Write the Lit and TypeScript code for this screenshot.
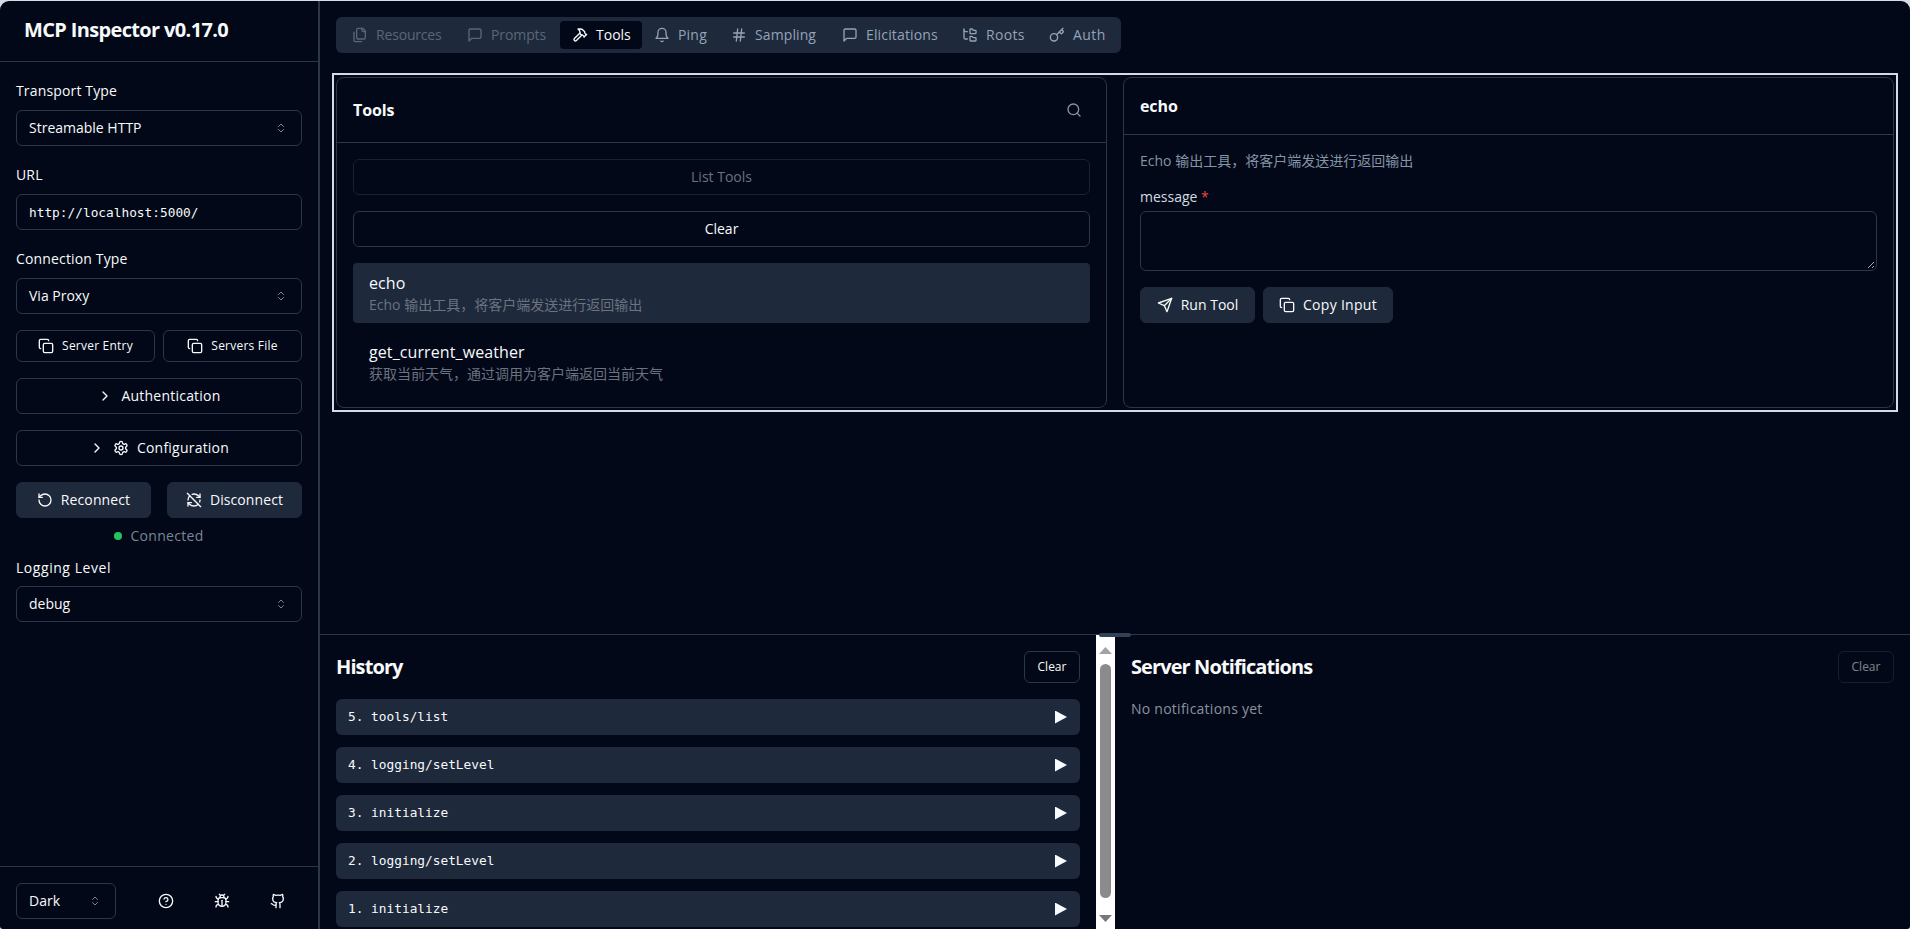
import { LitElement, html, css, svg } from "lit";
import { customElement } from "lit/decorators.js";

const ICONS: Record<string, any> = {
  copy: svg`<rect x="8" y="8" width="14" height="14" rx="2" ry="2"/><path d="M4 16c-1.1 0-2-.9-2-2V4c0-1.1.9-2 2-2h10c1.1 0 2 .9 2 2"/>`,
  chevronRight: svg`<path d="m9 18 6-6-6-6"/>`,
  updown: svg`<path d="m7 15 5 5 5-5"/><path d="m7 9 5-5 5 5"/>`,
  settings: svg`<path d="M12.22 2h-.44a2 2 0 0 0-2 2v.18a2 2 0 0 1-1 1.73l-.43.25a2 2 0 0 1-2 0l-.15-.08a2 2 0 0 0-2.73.73l-.22.38a2 2 0 0 0 .73 2.73l.15.1a2 2 0 0 1 1 1.72v.51a2 2 0 0 1-1 1.74l-.15.09a2 2 0 0 0-.73 2.73l.22.38a2 2 0 0 0 2.73.73l.15-.08a2 2 0 0 1 2 0l.43.25a2 2 0 0 1 1 1.73V20a2 2 0 0 0 2 2h.44a2 2 0 0 0 2-2v-.18a2 2 0 0 1 1-1.73l.43-.25a2 2 0 0 1 2 0l.15.08a2 2 0 0 0 2.73-.73l.22-.39a2 2 0 0 0-.73-2.73l-.15-.08a2 2 0 0 1-1-1.74v-.5a2 2 0 0 1 1-1.74l.15-.09a2 2 0 0 0 .73-2.73l-.22-.38a2 2 0 0 0-2.73-.73l-.15.08a2 2 0 0 1-2 0l-.43-.25a2 2 0 0 1-1-1.73V4a2 2 0 0 0-2-2z"/><circle cx="12" cy="12" r="3"/>`,
  rotate: svg`<path d="M3 12a9 9 0 1 0 9-9 9.75 9.75 0 0 0-6.74 2.74L3 8"/><path d="M3 3v5h5"/>`,
  refreshOff: svg`<path d="M21 8L18.74 5.74A9.75 9.75 0 0 0 12 3C11 3 10.03 3.16 9.13 3.47"/><path d="M8 16H3v5"/><path d="M3 12C3 9.51 4 7.26 5.64 5.64"/><path d="m3 16 2.26 2.26A9.75 9.75 0 0 0 12 21c2.49 0 4.74-1 6.36-2.64"/><path d="M21 12c0 1-.16 1.97-.47 2.87"/><path d="M21 3v5h-5"/><path d="M22 22 2 2"/>`,
  help: svg`<circle cx="12" cy="12" r="10"/><path d="M9.09 9a3 3 0 0 1 5.83 1c0 2-3 3-3 3"/><path d="M12 17h.01"/>`,
  bug: svg`<path d="m8 2 1.88 1.88"/><path d="M14.12 3.88 16 2"/><path d="M9 7.13v-1a3.003 3.003 0 1 1 6 0v1"/><path d="M12 20c-3.3 0-6-2.7-6-6v-3a4 4 0 0 1 4-4h4a4 4 0 0 1 4 4v3c0 3.3-2.7 6-6 6"/><path d="M12 20v-9"/><path d="M6.53 9C4.6 8.8 3 7.1 3 5"/><path d="M6 13H2"/><path d="M3 21c0-2.1 1.7-3.9 3.8-4"/><path d="M20.97 5c0 2.1-1.6 3.8-3.5 4"/><path d="M22 13h-4"/><path d="M17.2 17c2.1.1 3.8 1.9 3.8 4"/>`,
  github: svg`<path d="M15 22v-4a4.8 4.8 0 0 0-1-3.5c3 0 6-2 6-5.5.08-1.25-.27-2.48-1-3.5.28-1.15.28-2.35 0-3.5 0 0-1 0-3 1.5-2.64-.5-5.36-.5-8 0C6 2 5 2 5 2c-.3 1.15-.3 2.35 0 3.5A5.403 5.403 0 0 0 4 9c0 3.5 3 5.5 6 5.5-.39.49-.68 1.05-.85 1.65-.17.6-.22 1.23-.15 1.85v4"/><path d="M9 18c-4.51 2-5-2-7-2"/>`,
  files: svg`<path d="M20 7h-3a2 2 0 0 1-2-2V2"/><path d="M9 18a2 2 0 0 1-2-2V4a2 2 0 0 1 2-2h7l4 4v10a2 2 0 0 1-2 2Z"/><path d="M3 7.6v12.8A1.6 1.6 0 0 0 4.6 22h9.8"/>`,
  message: svg`<path d="M21 15a2 2 0 0 1-2 2H7l-4 4V5a2 2 0 0 1 2-2h14a2 2 0 0 1 2 2z"/>`,
  hammer: svg`<path d="m15 12-8.373 8.373a1 1 0 1 1-3-3L12 9"/><path d="m18 15 4-4"/><path d="m21.5 11.5-1.914-1.914A2 2 0 0 1 19 8.172V7l-2.26-2.26a6 6 0 0 0-4.202-1.756L9 2.96l.92.82A6.18 6.18 0 0 1 12 8.4V10l2 2h1.172a2 2 0 0 1 1.414.586L18.5 14.5"/>`,
  bell: svg`<path d="M6 8a6 6 0 0 1 12 0c0 7 3 9 3 9H3s3-2 3-9"/><path d="M10.3 21a1.94 1.94 0 0 0 3.4 0"/>`,
  hash: svg`<line x1="4" x2="20" y1="9" y2="9"/><line x1="4" x2="20" y1="15" y2="15"/><line x1="10" x2="8" y1="3" y2="21"/><line x1="16" x2="14" y1="3" y2="21"/>`,
  tree: svg`<path d="M20 10a1 1 0 0 0 1-1V6a1 1 0 0 0-1-1h-2.5a1 1 0 0 1-.8-.4l-.9-1.2A1 1 0 0 0 15 3h-2a1 1 0 0 0-1 1v5a1 1 0 0 0 1 1Z"/><path d="M20 21a1 1 0 0 0 1-1v-3a1 1 0 0 0-1-1h-2.9a1 1 0 0 1-.88-.55l-.42-.85a1 1 0 0 0-.92-.6H13a1 1 0 0 0-1 1v5a1 1 0 0 0 1 1Z"/><path d="M3 5a2 2 0 0 0 2 2h3"/><path d="M3 3v13a2 2 0 0 0 2 2h3"/>`,
  key: svg`<path d="m15.5 7.5 2.3 2.3a1 1 0 0 0 1.4 0l2.1-2.1a1 1 0 0 0 0-1.4L19 4"/><path d="m21 2-9.6 9.6"/><circle cx="7.5" cy="15.5" r="5.5"/>`,
  send: svg`<path d="m22 2-7 20-4-9-9-4Z"/><path d="M22 2 11 13"/>`,
  search: svg`<circle cx="11" cy="11" r="8"/><path d="m21 21-4.3-4.3"/>`,
};

const icon = (name: string) =>
  html`<svg class="icon" viewBox="0 0 24 24" fill="none" stroke="currentColor" stroke-width="2" stroke-linecap="round" stroke-linejoin="round">${ICONS[name]}</svg>`;

const TABS = [
  { n: "Resources", i: "files", w: 115, ls: -0.18, off: true },
  { n: "Prompts", i: "message", w: 105, ls: -0.1, off: true },
  { n: "Tools", i: "hammer", w: 82, ls: 0, on: true },
  { n: "Ping", i: "bell", w: 77, ls: 0.2 },
  { n: "Sampling", i: "hash", w: 111, ls: 0.1 },
  { n: "Elicitations", i: "message", w: 120, ls: 0.15 },
  { n: "Roots", i: "tree", w: 87, ls: 0.3 },
  { n: "Auth", i: "key", w: 80, ls: 0.4 },
];

const HISTORY = ["5. tools/list", "4. logging/setLevel", "3. initialize", "2. logging/setLevel", "1. initialize"];

@customElement("app-root")
export class AppRoot extends LitElement {
  static styles = css`
    :host {
      display: block;
      height: 929px;
      overflow: hidden;
      background: #d9dde3;
      color: #f8fafc;
      font-family: "Open Sans", "Noto Sans CJK SC", sans-serif;
      font-size: 14px;
      line-height: 20px;
    }
    * { box-sizing: border-box; }
    .icon { width: 16px; height: 16px; flex: none; display: block; }
    .app {
      display: flex;
      height: 928px;
      margin-top: 1px;
      background: #020817;
      border-radius: 9px 9px 3px 3px;
      overflow: hidden;
    }
    /* sidebar */
    .side {
      width: 320px;
      flex: none;
      display: flex;
      flex-direction: column;
      border-right: 2px solid #2b3648;
    }
    .brand {
      height: 61px;
      flex: none;
      border-bottom: 1px solid #2b3648;
      padding: 0 0 2px 24px;
      display: flex;
      align-items: center;
      font-size: 20px;
      font-weight: 700;
      letter-spacing: -0.65px;
    }
    .form { flex: 1; padding: 20px 16px 0; display: flex; flex-direction: column; }
    .label { height: 20px; line-height: 18px; margin-bottom: 8px; letter-spacing: 0.15px; }
    .label.loose { letter-spacing: 0.55px; line-height: 20px; }
    .field {
      height: 36px;
      flex: none;
      border: 1px solid #2b3648;
      border-radius: 6px;
      padding: 0 12px;
      display: flex;
      align-items: center;
      justify-content: space-between;
      margin-bottom: 20px;
    }
    .field .icon { opacity: 0.5; width: 12px; height: 12px; margin-right: 2px; }
    .mono {
      font-family: "DejaVu Sans Mono", monospace;
      font-size: 12.8px;
      letter-spacing: 0;
    }
    .url { padding-top: 2px; }
    .pair { display: flex; gap: 8px; margin: -4px 0 16px; }
    .pair .btn { flex: 1; height: 32px; font-size: 12px; letter-spacing: 0.22px; }
    .btn {
      height: 36px;
      flex: none;
      border: 1px solid #2b3648;
      border-radius: 6px;
      display: flex;
      align-items: center;
      justify-content: center;
      gap: 8px;
    }
    .stack { margin-bottom: 16px; letter-spacing: 0.22px; }
    .solid { background: #1e293b; border-color: #1e293b; }
    .duo { display: flex; gap: 16px; }
    .duo .btn { flex: 1; letter-spacing: 0.1px; }
    .status {
      display: flex;
      align-items: center;
      justify-content: center;
      gap: 8px;
      margin: 8px 0 12px;
      color: #7a8594;
      letter-spacing: 0.3px;
    }
    .dot { width: 8px; height: 8px; border-radius: 50%; background: #22c55e; }
    .foot {
      height: 63px;
      flex: none;
      border-top: 1px solid #2b3648;
      padding: 16px 16px 0;
      display: flex;
      align-items: flex-start;
    }
    .foot .field { width: 100px; margin: 0 30px 0 0; }
    .foot-icons { display: flex; gap: 16px; }
    .foot-icons span { width: 40px; height: 36px; display: flex; align-items: center; justify-content: center; }
    /* main */
    .main { flex: 1; min-width: 0; display: flex; flex-direction: column; position: relative; }
    .top { height: 633px; flex: none; padding: 16px; }
    .tabs {
      display: inline-flex;
      height: 36px;
      padding: 4px;
      background: #1e293b;
      border-radius: 6px;
      color: #94a3b8;
      margin-bottom: 24px;
      vertical-align: top;
    }
    .tab { display: flex; align-items: center; gap: 8px; padding: 0 0 0 12px; border-radius: 4px; white-space: nowrap; }
    .tab.off { opacity: 0.5; }
    .tab.on { background: #020817; color: #f8fafc; }
    .panes {
      height: 331px;
      display: grid;
      grid-template-columns: 1fr 1fr;
      grid-template-rows: minmax(0, 1fr);
      gap: 16px;
      outline: 2px solid #d5dbe5;
      outline-offset: 2px;
    }
    .card { border: 1px solid #2b3648; border-radius: 8px; display: flex; flex-direction: column; min-width: 0; min-height: 0; overflow: hidden; }
    .head {
      flex: none;
      border-bottom: 1px solid #2b3648;
      padding: 0 16px;
      display: flex;
      align-items: center;
      justify-content: space-between;
      font-size: 16px;
      font-weight: 700;
      letter-spacing: -0.1px;
    }
    .head.tall { height: 65px; }
    .head.short { height: 57px; }
    .head .icon { color: #8a94a3; margin-right: 8px; }
    .body { padding: 16px; display: flex; flex-direction: column; }
    .body .btn { margin-bottom: 16px; }
    .body .btn.dim { color: #6b7280; border-color: #1a2231; }
    .tool { padding: 8px 13px 8px 16px; border-radius: 4px; height: 60px; margin-bottom: 9px; flex: none; }
    .tool.sel { background: #1e293b; }
    .tool-name { font-size: 16px; line-height: 24px; letter-spacing: 0.1px; }
    .tool-desc { color: #6b7280; }
    .desc { color: #8494a8; margin-bottom: 16px; }
    .req { color: #ef4444; }
    .msg-label { height: 20px; margin-bottom: 4px; color: #d5dbe3; }
    .area {
      height: 60px;
      border: 1px solid #2b3648;
      border-radius: 6px;
      margin-bottom: 16px;
      position: relative;
    }
    .grip { position: absolute; right: 1px; bottom: 1px; width: 9px; height: 9px; color: #a8a8a8; }
    .actions { display: flex; gap: 8px; }
    .actions .btn { margin: 0; width: 115px; }
    .actions .btn.wide { width: 130px; letter-spacing: 0.3px; }
    /* bottom */
    .bottom { flex: 1; min-height: 0; border-top: 1px solid #2b3648; display: flex; }
    .handle {
      position: absolute;
      left: 50%;
      top: 632px;
      width: 32px;
      height: 4px;
      margin-left: -16px;
      border-radius: 2px;
      background: #334155;
    }
    .pane { padding: 16px; overflow: hidden; min-width: 0; }
    .pane.left { width: 776px; flex: none; }
    .pane.right { flex: 1; }
    .pane-head { display: flex; align-items: center; justify-content: space-between; height: 32px; margin-bottom: 16px; }
    .pane-title { font-size: 20px; font-weight: 700; letter-spacing: -0.9px; }
    .mini { height: 32px; width: 56px; font-size: 12px; border-radius: 6px; }
    .mini.off { opacity: 0.5; }
    .rows { display: flex; flex-direction: column; gap: 12px; }
    .row {
      height: 36px;
      flex: none;
      background: #1e293b;
      border-radius: 6px;
      padding: 0 13px 0 12px;
      display: flex;
      align-items: center;
      justify-content: space-between;
    }
    .tri { width: 12px; height: 13px; background: #f8fafc; clip-path: polygon(0 0, 100% 50%, 0 100%); }
    .scroll {
      width: 19px;
      flex: none;
      background: #fff;
      display: flex;
      flex-direction: column;
      align-items: center;
      padding-top: 12px;
    }
    .arrow { width: 13px; height: 7px; flex: none; }
    .arrow.up { background: #a3a3a3; clip-path: polygon(50% 0, 100% 100%, 0 100%); }
    .arrow.down { background: #787878; clip-path: polygon(0 0, 100% 0, 50% 100%); margin-top: 17px; }
    .thumb { width: 11px; height: 234px; background: #8b8b8b; border-radius: 6px; margin-top: 10px; flex: none; }
    .none { color: #8a93a0; margin-top: 1px; letter-spacing: 0.25px; }
  `;

  render() {
    const sel = (v: string) => html`<div class="field">
      <span>${v}</span>${icon("updown")}
    </div>`;
    return html`<div class="app">
      <aside class="side">
        <div class="brand">MCP Inspector v0.17.0</div>
        <div class="form">
          <div class="label">Transport Type</div>
          ${sel("Streamable HTTP")}
          <div class="label">URL</div>
          <div class="field"><span class="mono url">http://localhost:5000/</span></div>
          <div class="label">Connection Type</div>
          ${sel("Via Proxy")}
          <div class="pair">
            <div class="btn">${icon("copy")}Server Entry</div>
            <div class="btn">${icon("copy")}Servers File</div>
          </div>
          <div class="btn stack">${icon("chevronRight")}Authentication</div>
          <div class="btn stack">${icon("chevronRight")}${icon("settings")}Configuration</div>
          <div class="duo">
            <div class="btn solid">${icon("rotate")}Reconnect</div>
            <div class="btn solid">${icon("refreshOff")}Disconnect</div>
          </div>
          <div class="status"><span class="dot"></span>Connected</div>
          <div class="label loose">Logging Level</div>
          ${sel("debug")}
        </div>
        <div class="foot">
          ${sel("Dark")}
          <div class="foot-icons">
            <span>${icon("help")}</span><span>${icon("bug")}</span><span>${icon("github")}</span>
          </div>
        </div>
      </aside>
      <main class="main">
        <section class="top">
          <div class="tabs">
            ${TABS.map(
              (t) => html`<div class="tab ${t.off ? "off" : ""} ${t.on ? "on" : ""}" style="width:${t.w}px;letter-spacing:${t.ls}px">${icon(t.i)}${t.n}</div>`
            )}
          </div>
          <div class="panes">
            <div class="card">
              <div class="head tall">Tools${icon("search")}</div>
              <div class="body">
                <div class="btn dim">List Tools</div>
                <div class="btn">Clear</div>
                <div class="tool sel">
                  <div class="tool-name">echo</div>
                  <div class="tool-desc">Echo 输出工具，将客户端发送进行返回输出</div>
                </div>
                <div class="tool">
                  <div class="tool-name">get_current_weather</div>
                  <div class="tool-desc">获取当前天气，通过调用为客户端返回当前天气</div>
                </div>
              </div>
            </div>
            <div class="card">
              <div class="head short">echo</div>
              <div class="body">
                <div class="desc">Echo 输出工具，将客户端发送进行返回输出</div>
                <div class="msg-label">message <span class="req">*</span></div>
                <div class="area">
                  <svg class="grip" viewBox="0 0 9 9" fill="none" stroke="currentColor" stroke-width="1"><path d="M8 2 2 8M8 6 6 8"/></svg>
                </div>
                <div class="actions">
                  <div class="btn solid">${icon("send")}Run Tool</div>
                  <div class="btn solid wide">${icon("copy")}Copy Input</div>
                </div>
              </div>
            </div>
          </div>
        </section>
        <section class="bottom">
          <div class="pane left">
            <div class="pane-head">
              <span class="pane-title">History</span>
              <div class="btn mini">Clear</div>
            </div>
            <div class="rows">
              ${HISTORY.map((h) => html`<div class="row"><span class="mono">${h}</span><span class="tri"></span></div>`)}
            </div>
          </div>
          <div class="scroll">
            <div class="arrow up"></div>
            <div class="thumb"></div>
            <div class="arrow down"></div>
          </div>
          <div class="pane right">
            <div class="pane-head">
              <span class="pane-title">Server Notifications</span>
              <div class="btn mini off">Clear</div>
            </div>
            <div class="none">No notifications yet</div>
          </div>
        </section>
        <div class="handle"></div>
      </main>
    </div>`;
  }
}
